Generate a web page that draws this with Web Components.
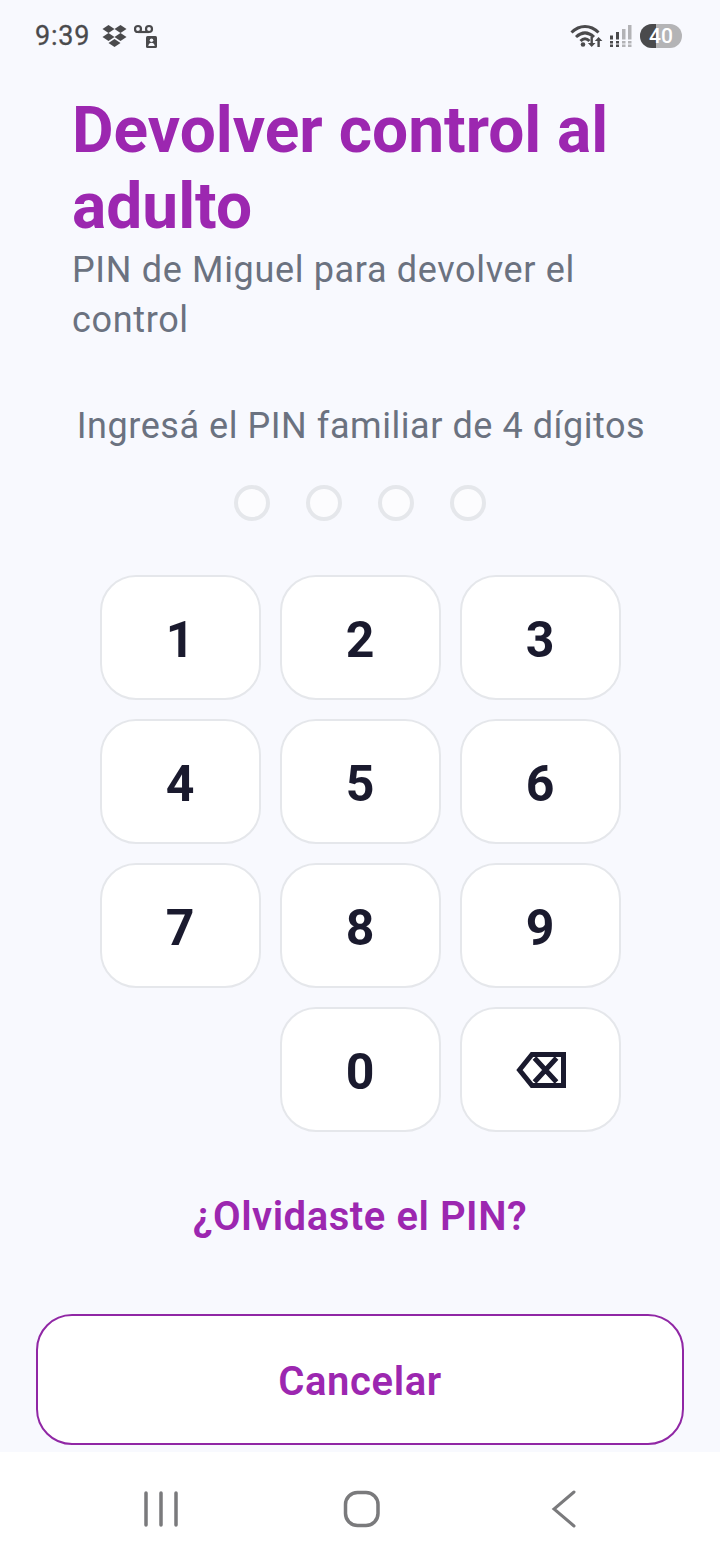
<!DOCTYPE html>
<html lang="es">
<head>
<meta charset="utf-8">
<title>Devolver control</title>
<style>
  html, body { margin: 0; background: #f8f9fe; }
  body { font-family: Roboto, "Liberation Sans", sans-serif; }
</style>
</head>
<body>
<app-screen>
  <status-bar></status-bar>
  <page-heading title="Devolver control al adulto" subtitle="PIN de Miguel para devolver el control"></page-heading>
  <pin-entry label="Ingresá el PIN familiar de 4 dígitos"></pin-entry>
  <key-pad></key-pad>
  <link-text>¿Olvidaste el PIN?</link-text>
  <outline-button>Cancelar</outline-button>
  <nav-bar></nav-bar>
</app-screen>

<script>
class AppScreen extends HTMLElement {
  constructor() {
    super();
    this.attachShadow({mode: 'open'}).innerHTML = `
      <style>
        :host {
          display: flex;
          flex-direction: column;
          width: 720px;
          height: 1560px;
          overflow: hidden;
          background: #f8f9fe;
        }
      </style>
      <slot></slot>
    `;
  }
}

class StatusBar extends HTMLElement {
  constructor() {
    super();
    this.attachShadow({mode: 'open'}).innerHTML = `
      <style>
        :host {
          display: flex;
          align-items: center;
          height: 72px;
          padding: 0 38px 0 35px;
          color: #4a4a4c;
          font: 400 27px Roboto, sans-serif;
        }
        .time { letter-spacing: .8px; margin-right: 12px; -webkit-text-stroke: .3px currentColor; }
        svg { display: block; fill: currentColor; }
        .spacer { flex: 1; }
        .battery {
          position: relative;
          width: 42px;
          height: 24px;
          border-radius: 12px;
          overflow: hidden;
          background: #b4b4b6;
          margin-left: 8px;
        }
        .battery i {
          display: block;
          width: 16px;
          height: 100%;
          background: #4a4a4c;
        }
        .battery span {
          position: absolute;
          inset: 0;
          text-align: center;
          font: 500 21px/25px Roboto, sans-serif;
          color: #fff;
        }
      </style>
      <span class="time">9:39</span>
      <svg width="25" height="22" viewBox="0 0 25 22">
        <path d="M6.500 0 12.500 4 6.500 8 .5 4zM18.500 0 24.500 4 18.500 8 12.500 4zM6.500 8 12.500 12 6.500 16 .5 12zM18.500 8 24.500 12 18.500 16 12.500 12zM12.500 14 18.500 18 12.500 22 6.500 18z"/>
      </svg>
      <svg width="24" height="24" viewBox="0 0 24 24" style="margin-left:7px">
        <circle cx="4" cy="5" r="3" fill="none" stroke="currentColor" stroke-width="2.200"/>
        <circle cx="15" cy="5" r="3" fill="none" stroke="currentColor" stroke-width="2.200"/>
        <path d="M4 8h11" stroke="currentColor" stroke-width="2.200"/>
        <path d="M12 13.500a1.500 1.500 0 0 1 1.500-1.500h8a1.500 1.500 0 0 1 1.500 1.500v9a1.500 1.500 0 0 1-1.500 1.500h-8a1.500 1.500 0 0 1-1.500-1.500z"/>
        <circle cx="17.500" cy="16.200" r="1.800" fill="#f8f9fe"/>
        <path d="M14.300 22c.4-2.400 1.500-3.200 3.200-3.200s2.800.8 3.200 3.200z" fill="#f8f9fe"/>
      </svg>
      <span class="spacer"></span>
      <svg width="33" height="23" viewBox="0 0 33 23">
        <path d="M1.500 8.500C9.500 .5 20.500 .5 28.500 8.500M6 13C12 7.500 18 7.500 24 13M10.500 17C13.500 14 16.500 14 19.500 17" fill="none" stroke="currentColor" stroke-width="3"/>
        <circle cx="13" cy="20.500" r="2.300"/>
        <path d="M19.500 13h2.400v6h2.600l-3.800 4-3.800-4h2.600zM28.800 23h-2.400v-6h-2.600l3.800-4 3.800 4h-2.600z" transform="translate(1 0)"/>
      </svg>
      <svg width="23" height="22" viewBox="0 0 23 22" style="margin-left:6px">
        <path d="M1 10.500h3v4H1zM1 16h3v2.500H1zM1 19.500h3V22H1zM7 7h3v7.500H7zM7 16h3v2.500H7zM7 19.500h3V22H7z"/>
        <path d="M13 4h3.500v10.500H13zM13 16h3.500v2.500H13zM13 19.500h3.500V22H13zM19 0h3.500v14.500H19zM19 16h3.500v2.500H19zM19 19.500h3.500V22H19z" opacity=".4"/>
      </svg>
      <div class="battery"><i></i><span>40</span></div>
    `;
  }
}

class PageHeading extends HTMLElement {
  constructor() {
    super();
    this.attachShadow({mode: 'open'}).innerHTML = `
      <style>
        :host {
          display: block;
          padding: 21px 72px 0 72px;
        }
        h1 {
          margin: 0;
          font: 700 64px/76px Roboto, sans-serif;
          color: #9c27b0;
        }
        p {
          margin: 0;
          font: 400 36px/50px Roboto, sans-serif;
          letter-spacing: .66px;
          color: #6b7280;
        }
      </style>
      <h1></h1>
      <p></p>
    `;
  }

  connectedCallback() {
    this.shadowRoot.querySelector('h1').textContent = this.getAttribute('title');
    this.shadowRoot.querySelector('p').textContent = this.getAttribute('subtitle');
  }
}

class PinEntry extends HTMLElement {
  constructor() {
    super();
    this.attachShadow({mode: 'open'}).innerHTML = `
      <style>
        :host {
          display: block;
          padding-top: 56px;
          text-align: center;
        }
        .label {
          padding-left: 2px;
          font: 400 36px/50px Roboto, sans-serif;
          letter-spacing: .55px;
          color: #6b7280;
        }
        .dots {
          display: flex;
          justify-content: center;
          gap: 36px;
          margin-top: 34px;
        }
        .dots i {
          box-sizing: border-box;
          width: 36px;
          height: 36px;
          border: 4px solid #e5e7eb;
          border-radius: 50%;
          background: #fcfcfe;
        }
      </style>
      <div class="label"></div>
      <div class="dots"><i></i><i></i><i></i><i></i></div>
    `;
  }

  connectedCallback() {
    this.shadowRoot.querySelector('.label').textContent = this.getAttribute('label');
  }
}

class PinKey extends HTMLElement {
  constructor() {
    super();
    this.attachShadow({mode: 'open'}).innerHTML = `
      <style>
        :host {
          box-sizing: border-box;
          display: flex;
          align-items: center;
          justify-content: center;
          height: 125px;
          padding-top: 6px;
          border: 2px solid #e5e7eb;
          border-radius: 36px;
          background: #fff;
          color: #1a1a2e;
          font: 700 50px Roboto, sans-serif;
        }
      </style>
      <slot></slot>
    `;
  }
}

class KeyPad extends HTMLElement {
  constructor() {
    super();
    this.attachShadow({mode: 'open'}).innerHTML = `
      <style>
        :host {
          display: grid;
          grid-template-columns: repeat(3, 161px);
          grid-auto-rows: 125px;
          gap: 19px;
          justify-content: center;
          margin-top: 54px;
        }
        .blank { visibility: hidden; }
      </style>
    `;
    for (const label of ['1', '2', '3', '4', '5', '6', '7', '8', '9', '', '0', 'back']) {
      if (label == '') {
        const blank = document.createElement('div');
        blank.className = 'blank';
        this.shadowRoot.append(blank);
        continue;
      }
      const key = document.createElement('pin-key');
      if (label == 'back') {
        key.innerHTML = `<svg width="50" height="36" viewBox="0 0 50 36" style="display:block;margin:-4px 0 0 2px">
          <path d="M16 2.500H47.500V33.500H16L3.500 18z" fill="none" stroke="#1a1a2e" stroke-width="5"/>
          <path d="M18.500 6 40.500 30M40.500 6 18.500 30" fill="none" stroke="#1a1a2e" stroke-width="5"/>
        </svg>`;
      } else {
        key.textContent = label;
      }
      this.shadowRoot.append(key);
    }
  }
}

class LinkText extends HTMLElement {
  constructor() {
    super();
    this.attachShadow({mode: 'open'}).innerHTML = `
      <style>
        :host {
          display: block;
          margin-top: 60px;
          text-align: center;
          font: 600 40px/50px Roboto, sans-serif;
          letter-spacing: .55px;
          color: #9c27b0;
        }
      </style>
      <slot></slot>
    `;
  }
}

class OutlineButton extends HTMLElement {
  constructor() {
    super();
    this.attachShadow({mode: 'open'}).innerHTML = `
      <style>
        :host {
          box-sizing: border-box;
          display: flex;
          align-items: center;
          justify-content: center;
          height: 132px;
          padding-top: 4px;
          margin: 72px 36px 0;
          border: 2.500px solid #9027a5;
          border-radius: 36px;
          background: #fff;
          font: 600 40px Roboto, sans-serif;
          letter-spacing: .6px;
          color: #9c27b0;
        }
      </style>
      <slot></slot>
    `;
  }
}

class NavBar extends HTMLElement {
  constructor() {
    super();
    this.attachShadow({mode: 'open'}).innerHTML = `
      <style>
        :host {
          display: flex;
          align-items: center;
          box-sizing: border-box;
          height: 108px;
          margin-top: 7px;
          padding: 6px 0 0 143px;
          background: #fff;
        }
        svg { display: block; fill: none; stroke: #7a7a7c; stroke-linecap: round; }
        .home { margin-left: 164px; }
        .back { margin-left: 170px; }
      </style>
      <svg width="36" height="36" viewBox="0 0 36 36" stroke-width="3.500">
        <path d="M3 2V34M18 2V34M33 2V34"/>
      </svg>
      <svg class="home" width="38" height="38" viewBox="0 0 38 38" stroke-width="3.500">
        <rect x="2.500" y="2.500" width="32.500" height="33" rx="12"/>
      </svg>
      <svg class="back" width="26" height="38" viewBox="0 0 26 38" stroke-width="3">
        <path d="M23 2 3 19 23 36"/>
      </svg>
    `;
  }
}

customElements.define('app-screen', AppScreen);
customElements.define('status-bar', StatusBar);
customElements.define('page-heading', PageHeading);
customElements.define('pin-entry', PinEntry);
customElements.define('pin-key', PinKey);
customElements.define('key-pad', KeyPad);
customElements.define('link-text', LinkText);
customElements.define('outline-button', OutlineButton);
customElements.define('nav-bar', NavBar);
</script>
</body>
</html>
